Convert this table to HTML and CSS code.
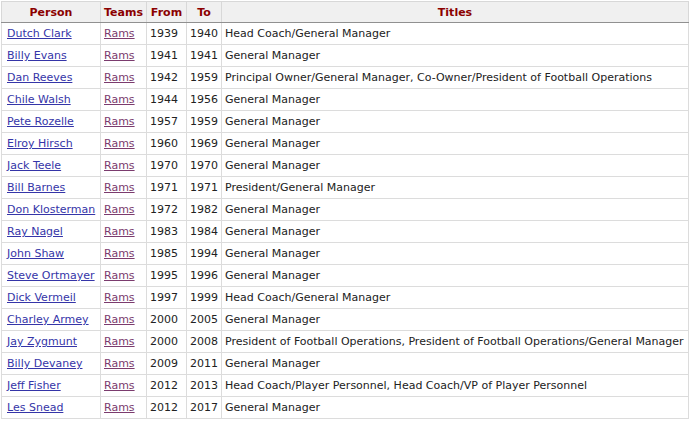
FILE: index.html
```html
<!DOCTYPE html>
<html>
<head>
<meta charset="utf-8">
<link rel="stylesheet" href="styles.css">
</head>
<body>
<div class="wrap">
<table class="roster">
<colgroup>
<col class="c-person"><col class="c-team"><col class="c-from"><col class="c-to"><col class="c-title">
</colgroup>
<thead>
<tr><th>Person</th><th>Teams</th><th>From</th><th>To</th><th>Titles</th></tr>
</thead>
<tbody>
<tr><td><a class="p" href="#">Dutch Clark</a></td><td><a class="t" href="#">Rams</a></td><td>1939</td><td>1940</td><td>Head Coach/General Manager</td></tr>
<tr><td><a class="p" href="#">Billy Evans</a></td><td><a class="t" href="#">Rams</a></td><td>1941</td><td>1941</td><td>General Manager</td></tr>
<tr><td><a class="p" href="#">Dan Reeves</a></td><td><a class="t" href="#">Rams</a></td><td>1942</td><td>1959</td><td>Principal Owner/General Manager, Co-Owner/President of Football Operations</td></tr>
<tr><td><a class="p" href="#">Chile Walsh</a></td><td><a class="t" href="#">Rams</a></td><td>1944</td><td>1956</td><td>General Manager</td></tr>
<tr><td><a class="p" href="#">Pete Rozelle</a></td><td><a class="t" href="#">Rams</a></td><td>1957</td><td>1959</td><td>General Manager</td></tr>
<tr><td><a class="p" href="#">Elroy Hirsch</a></td><td><a class="t" href="#">Rams</a></td><td>1960</td><td>1969</td><td>General Manager</td></tr>
<tr><td><a class="p" href="#">Jack Teele</a></td><td><a class="t" href="#">Rams</a></td><td>1970</td><td>1970</td><td>General Manager</td></tr>
<tr><td><a class="p" href="#">Bill Barnes</a></td><td><a class="t" href="#">Rams</a></td><td>1971</td><td>1971</td><td>President/General Manager</td></tr>
<tr><td><a class="p" href="#">Don Klosterman</a></td><td><a class="t" href="#">Rams</a></td><td>1972</td><td>1982</td><td>General Manager</td></tr>
<tr><td><a class="p" href="#">Ray Nagel</a></td><td><a class="t" href="#">Rams</a></td><td>1983</td><td>1984</td><td>General Manager</td></tr>
<tr><td><a class="p" href="#">John Shaw</a></td><td><a class="t" href="#">Rams</a></td><td>1985</td><td>1994</td><td>General Manager</td></tr>
<tr><td><a class="p" href="#">Steve Ortmayer</a></td><td><a class="t" href="#">Rams</a></td><td>1995</td><td>1996</td><td>General Manager</td></tr>
<tr><td><a class="p" href="#">Dick Vermeil</a></td><td><a class="t" href="#">Rams</a></td><td>1997</td><td>1999</td><td>Head Coach/General Manager</td></tr>
<tr><td><a class="p" href="#">Charley Armey</a></td><td><a class="t" href="#">Rams</a></td><td>2000</td><td>2005</td><td>General Manager</td></tr>
<tr><td><a class="p" href="#">Jay Zygmunt</a></td><td><a class="t" href="#">Rams</a></td><td>2000</td><td>2008</td><td>President of Football Operations, President of Football Operations/General Manager</td></tr>
<tr><td><a class="p" href="#">Billy Devaney</a></td><td><a class="t" href="#">Rams</a></td><td>2009</td><td>2011</td><td>General Manager</td></tr>
<tr><td><a class="p" href="#">Jeff Fisher</a></td><td><a class="t" href="#">Rams</a></td><td>2012</td><td>2013</td><td>Head Coach/Player Personnel, Head Coach/VP of Player Personnel</td></tr>
<tr><td><a class="p" href="#">Les Snead</a></td><td><a class="t" href="#">Rams</a></td><td>2012</td><td>2017</td><td>General Manager</td></tr>
</tbody>
</table>
</div>
</body>
</html>
```
FILE: styles.css
```css
html, body {
  margin: 0;
  padding: 0;
  background: #fff;
}
.wrap {
  padding: 1px 0 0 1px;
  width: 688px;
}
.roster {
  border-collapse: collapse;
  table-layout: fixed;
  width: 688px;
  font-family: "DejaVu Sans", Verdana, sans-serif;
  font-size: 11px;
  color: #222;
  border: 1px solid #a0a0a0;
}
.c-person { width: 99px; }
.c-team { width: 46px; }
.c-from { width: 40px; }
.c-to { width: 35px; }
.c-title { width: auto; }
.roster th {
  background: #f0f0f0;
  color: #8b0000;
  font-weight: bold;
  height: 20px;
  padding: 0 2px;
  text-align: center;
  border: 1px solid #d8d8d8;
  border-bottom: 1px solid #909090;
  white-space: nowrap;
}
.roster td {
  height: 21px;
  padding: 0 3px;
  border: 1px solid #dcdcdc;
  white-space: nowrap;
  overflow: hidden;
}
.roster td:first-child {
  padding-left: 5px;
}
.roster a {
  text-decoration: underline;
}
.roster a.p { color: #3535a8; }
.roster a.t { color: #7b3b6e; }
```
